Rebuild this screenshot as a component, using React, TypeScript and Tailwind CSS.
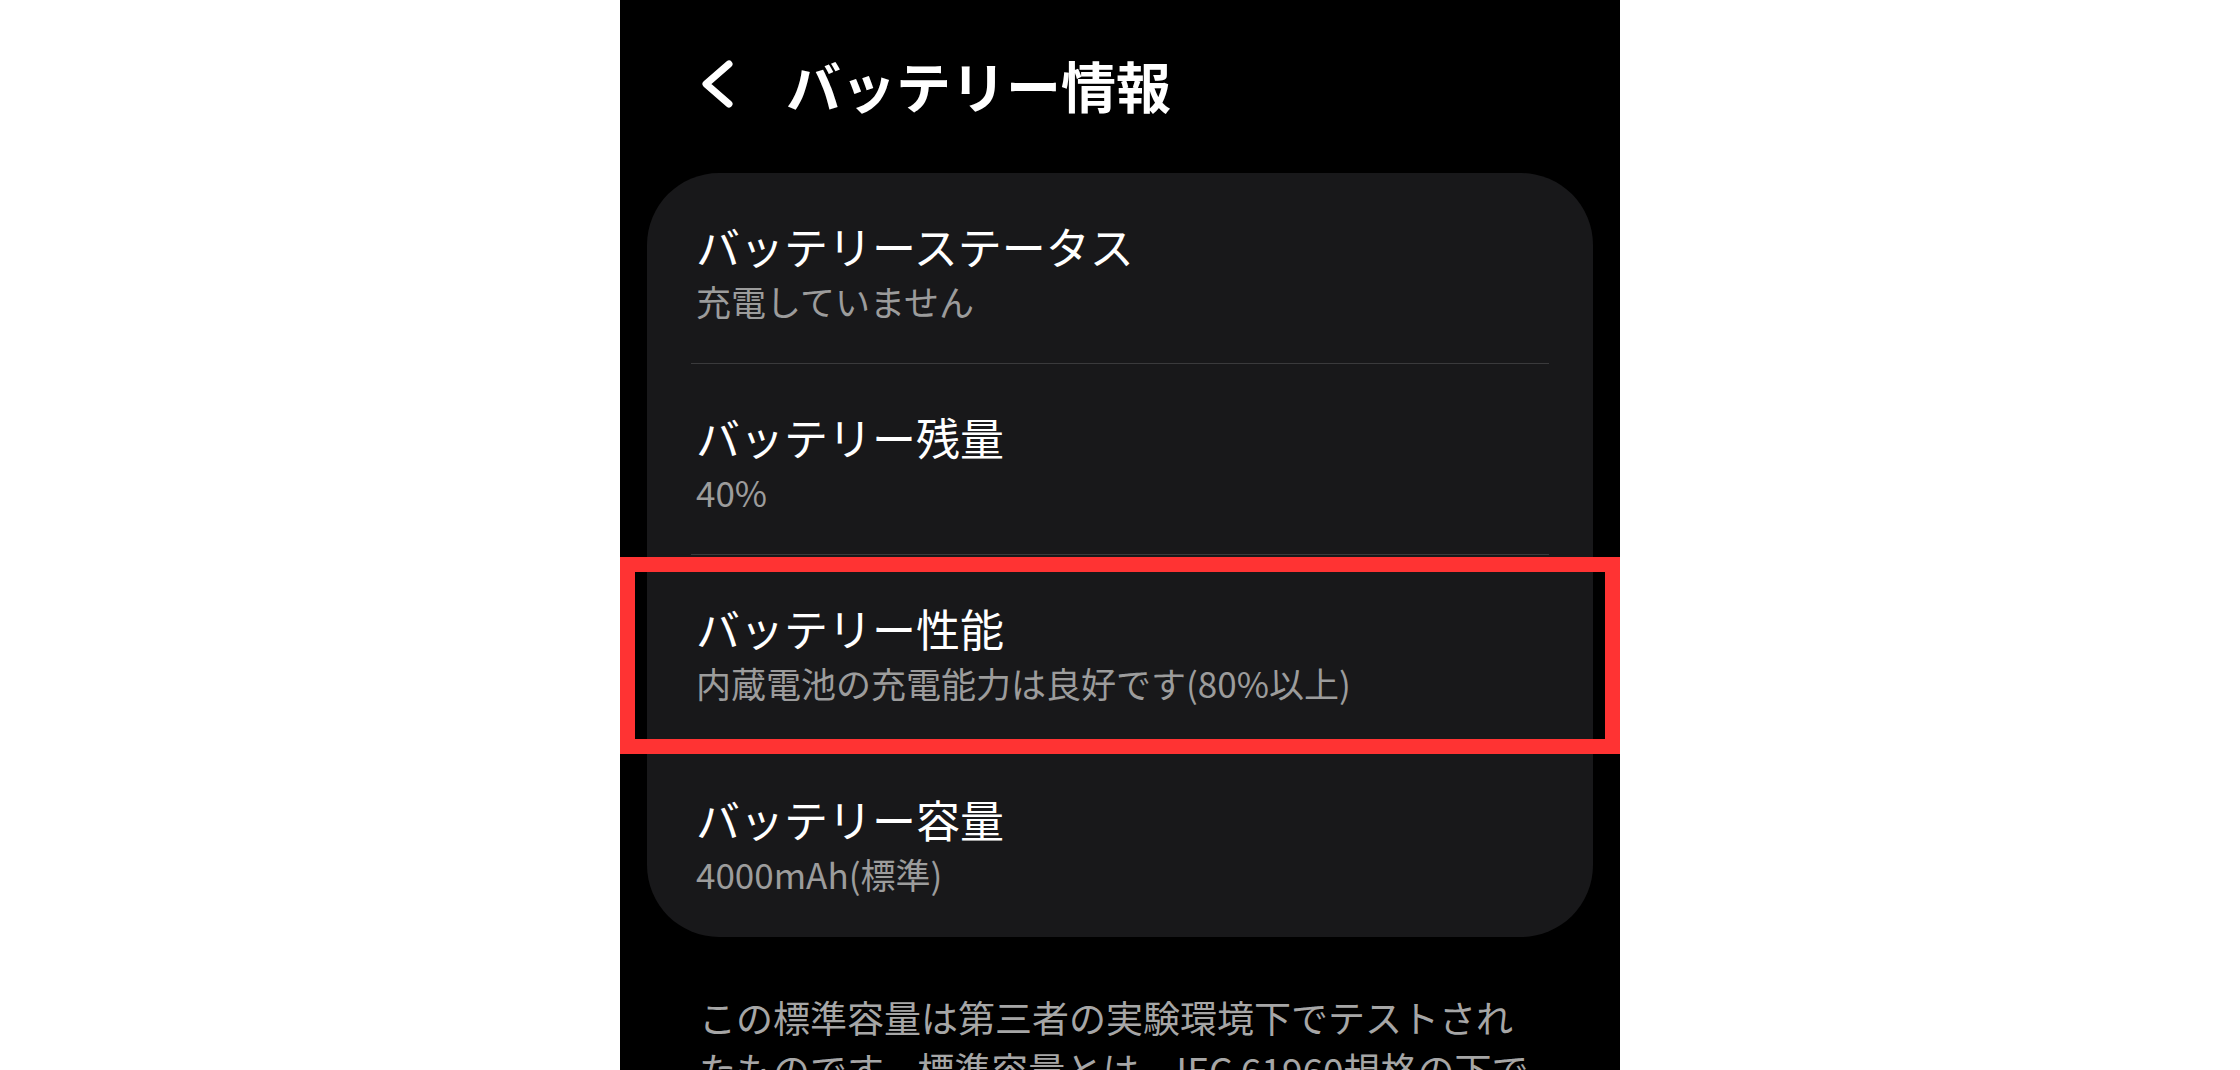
import * as React from 'react'

type Item = { title: string; value: string }

const items: Item[] = [
  { title: 'バッテリーステータス', value: '充電していません' },
  { title: 'バッテリー残量', value: '40%' },
  { title: 'バッテリー性能', value: '内蔵電池の充電能力は良好です(80%以上)' },
  { title: 'バッテリー容量', value: '4000mAh(標準)' },
]

function Row({ item, last }: { item: Item; last: boolean }) {
  return (
    <div>
      <div className="px-[49px] pt-[45px] pb-[40px] last:pb-[41px]">
        <div className="text-[44px] leading-[56px] text-white">{item.title}</div>
        <div className="mt-[5px] text-[35px] leading-[44px] text-[#9c9c9c]">{item.value}</div>
      </div>
      {!last && <div className="mx-[44px] h-px bg-[#3a3a3c]" />}
    </div>
  )
}

export default function App() {
  return (
    <div
      className="h-[1070px] w-full overflow-hidden bg-white flex justify-center"
      style={{ fontFamily: '"Noto Sans CJK JP", "Noto Sans", sans-serif' }}
    >
      <div className="relative w-[1000px] bg-black">
        <div className="flex items-center h-[173px] pb-[6px]">
          <svg
            className="ml-[80px]"
            width="40"
            height="56"
            viewBox="0 0 40 56"
            fill="none"
            stroke="white"
            strokeWidth="7"
            strokeLinecap="round"
            strokeLinejoin="round"
          >
            <path d="M29 8 L6 28 L29 48" />
          </svg>
          <h1 className="ml-[46px] text-[55px] leading-[70px] font-bold text-white">
            バッテリー情報
          </h1>
        </div>

        <div className="mx-[27px] rounded-[72px] bg-[#18181a]">
          {items.map((item, i) => (
            <Row key={item.title} item={item} last={i === items.length - 1} />
          ))}
        </div>

        <p className="mt-[54px] px-[79px] text-[37px] leading-[52px] text-[#a6a6a6]">
          <span className="block w-[830px]">
            この標準容量は第三者の実験環境下でテストされたものです。標準容量とは、IEC 61960規格の下で測定された容量です。
          </span>
        </p>

        {/* red highlight annotation */}
        <div className="absolute left-0 top-[557px] w-[1000px] h-[197px] border-[15px] border-[#ff3333]" />
      </div>
    </div>
  )
}
